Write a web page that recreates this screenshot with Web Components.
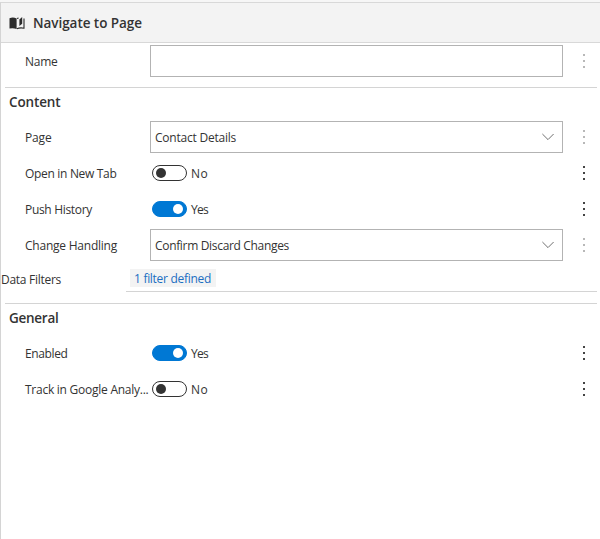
<!DOCTYPE html>
<html lang="en"><head><meta charset="utf-8"><title>Navigate to Page</title>
<style>
html,body{margin:0;height:100%;overflow:hidden;background:#fff}
body{font:12px/18px "Open Sans","Noto Sans",sans-serif;color:#333}
</style></head><body>
<property-panel>
  <panel-header slot="header"><fit-text w="109">Navigate to Page</fit-text></panel-header>
  <property-row muted><fit-text slot="label" w="32.5">Name</fit-text><field-box></field-box></property-row>
  <panel-section style="margin-top:8px">
    <fit-text slot="title" w="51.5">Content</fit-text>
    <property-row muted><fit-text slot="label" w="26.5">Page</fit-text><field-box select><fit-text w="81">Contact Details</fit-text></field-box></property-row>
    <property-row><fit-text slot="label" w="91.5">Open in New Tab</fit-text><toggle-switch><fit-text w="17">No</fit-text></toggle-switch></property-row>
    <property-row><fit-text slot="label" w="67">Push History</fit-text><toggle-switch on><fit-text w="17">Yes</fit-text></toggle-switch></property-row>
    <property-row muted><fit-text slot="label" w="92">Change Handling</fit-text><field-box select><fit-text w="134">Confirm Discard Changes</fit-text></field-box></property-row>
    <filter-row><fit-text slot="label" w="60">Data Filters</fit-text><fit-text w="77">1 filter defined</fit-text></filter-row>
  </panel-section>
  <panel-section style="margin-top:11px">
    <fit-text slot="title" w="49.5">General</fit-text>
    <property-row><fit-text slot="label" w="42.5">Enabled</fit-text><toggle-switch on><fit-text w="17">Yes</fit-text></toggle-switch></property-row>
    <property-row><fit-text slot="label" w="123.5">Track in Google Analy...</fit-text><toggle-switch><fit-text w="17">No</fit-text></toggle-switch></property-row>
  </panel-section>
</property-panel>
<script>
function define(name, html, setup) {
  const t = document.createElement('template');
  t.innerHTML = html;
  customElements.define(name, class extends HTMLElement {
    constructor() {
      super();
      this.attachShadow({mode: 'open'}).append(t.content.cloneNode(true));
    }
    connectedCallback() { if (setup) setup(this); }
  });
}
define('property-panel', `<style>
:host{display:block;box-sizing:border-box;height:100vh;padding-top:2px;background:linear-gradient(#f6f6f6 2px,#fff 2px)}
main{box-sizing:border-box;height:100%;border-left:1px solid #d4d4d4;border-top:1px solid #d8d8d8}
</style><main><slot name="header"></slot><slot></slot></main>`);
define('panel-header', `<style>
:host{display:flex;align-items:center;box-sizing:border-box;height:40px;background:#f3f3f3;border-bottom:1px solid #d8d8d8;padding-left:8px;font-size:13.5px;font-weight:600;color:#333}
svg{width:16px;height:14px;margin-right:8px}
</style><svg viewBox="0 0 16 14"><path fill="#2b2b2b" d="M.5 2.2Q4 .9 7.6 2.4V13Q4 11.6 .5 12.6Z"/><path fill="none" stroke="#2b2b2b" stroke-width="1.1" d="M8 2.5 9.6 2M15 2.6V12.2Q11 11.4 7.8 12.7"/><path fill="#2b2b2b" d="M10.4 3.6 13.2.9V7.7L10.4 10Z"/></svg><slot></slot>`);
define('panel-section', `<style>
:host{display:block}
header{display:flex;align-items:center;box-sizing:border-box;height:32px;margin:0 3px 0 4px;padding:0 0 3px 4px;border-top:1px solid #d4d4d4;font-size:13.5px;font-weight:600;color:#333}
</style><header><slot name="title"></slot></header><slot></slot>`);
define('property-row', `<style>
:host{display:grid;grid-template-columns:125px 413px 1fr;align-items:center;height:36px;padding-left:24px}
::slotted([slot=label]){padding-top:2px}
svg{width:2px;height:14px;margin-left:20px;fill:#444}
:host([muted]) svg{fill:#b8b8b8}
</style><slot name="label"></slot><slot></slot>
<svg viewBox="0 0 2 14"><rect width="2" height="2"/><rect y="6" width="2" height="2"/><rect y="12" width="2" height="2"/></svg>`);
define('field-box', `<style>
:host{display:flex;align-items:center;justify-content:space-between;box-sizing:border-box;height:32px;border:1px solid #b3b3b3;background:#fff;padding:0 8px 0 4px}
span{padding-top:2px}
svg{display:none;width:12px;height:8px}
:host([select]) svg{display:block}
</style><span><slot></slot></span><svg viewBox="0 0 12 8"><path d="M.4 1 6 6.6 11.6 1" fill="none" stroke="#707070"/></svg>`);
define('toggle-switch', `<style>
:host{display:flex;align-items:center;padding-left:2px}
i{display:flex;align-items:center;box-sizing:border-box;width:35px;height:16px;border:1px solid #333;border-radius:8px;padding:0 3px;margin-right:4px;background:#fff}
b{width:10px;height:10px;border-radius:50%;background:#333}
::slotted(*){padding-top:2px}
:host([on]) i{background:#0078d4;border-color:#0078d4;justify-content:flex-end}
:host([on]) b{background:#fff}
</style><i><b></b></i><slot></slot>`);
define('filter-row', `<style>
:host{display:grid;grid-template-columns:125px 1fr;height:29px}
.l{padding-top:8px}
.v{border-bottom:1px solid #d4d4d4;margin-right:3px;padding:6px 0 0 4px}
.p{display:flex;box-sizing:border-box;width:86px;height:18px;padding:1px 0 0 4px;background:#f3f3f3;color:#1b6ec2}
</style><div class="l"><slot name="label"></slot></div><div class="v"><div class="p"><slot></slot></div></div>`);
/* Spreads the letters so the text fills the width given by "w". */
define('fit-text', `<style>:host{display:block;white-space:pre}span{display:inline-block}</style><span><slot></slot></span>`, el => {
  const s = el.shadowRoot.querySelector('span'), n = el.textContent.length;
  s.style.letterSpacing = '0';
  const d = (el.getAttribute('w') - s.getBoundingClientRect().width) / n;
  s.style.letterSpacing = d.toFixed(3) + 'px';
});
</script></body></html>
